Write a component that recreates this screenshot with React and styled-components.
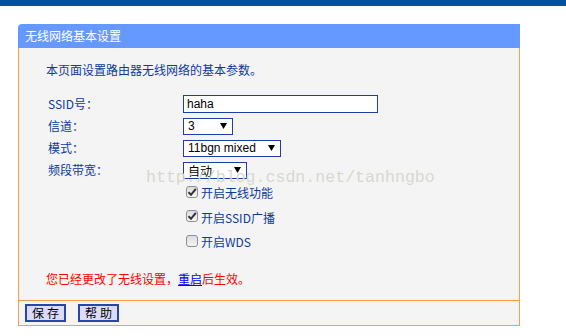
import styled, { createGlobalStyle } from 'styled-components';

const GlobalStyle = createGlobalStyle`
  html, body {
    margin: 0;
    padding: 0;
    background: #ffffff;
  }
  body {
    font-family: "Noto Sans CJK SC", "Liberation Sans", sans-serif;
    font-size: 12px;
  }
`;

const TopBar = styled.div`
  height: 6px;
  background: #0250a2;
`;

const Panel = styled.div`
  position: relative;
  width: 502px;
  margin: 18px 0 0 18px;
`;

const PanelHeader = styled.div`
  height: 24px;
  line-height: 24px;
  padding-left: 7px;
  background: #6699ff;
  color: #ffffff;
  font-size: 12px;
  border-top-left-radius: 4px;
`;

const PanelBody = styled.div`
  background: #f4f4f4;
  border-left: 1px solid #f7a04a;
  border-right: 1px solid #f7a04a;
  padding: 14px 0 13px 27px;
`;

const Intro = styled.div`
  line-height: 16px;
  color: #0c3a9c;
`;

const Form = styled.div`
  margin-top: 15px;
  padding-left: 2px;
`;

const FieldRow = styled.div`
  display: flex;
  align-items: center;
  height: 22px;
`;

const Label = styled.div`
  width: 135px;
  color: #0c3a9c;
  line-height: 16px;
`;

const TextInput = styled.input`
  box-sizing: border-box;
  width: 195px;
  height: 18px;
  margin: 0;
  padding: 0 3px;
  border: 1px solid #1f3fa0;
  background: #ffffff;
  font-family: "Liberation Sans", Arial, sans-serif;
  font-size: 12px;
  color: #000000;
  outline: none;
`;

const Select = styled.div`
  box-sizing: border-box;
  display: flex;
  align-items: center;
  justify-content: space-between;
  width: ${(p) => p.$width}px;
  height: 17px;
  padding: 0 5px 0 4px;
  border: 1px solid #1f3fa0;
  background: #ffffff;
  font-family: "Liberation Sans", "Noto Sans CJK SC", sans-serif;
  font-size: 12px;
  color: #000000;
`;

const CheckRow = styled.div`
  display: flex;
  align-items: center;
  height: 24.5px;
  padding-left: 140px;
`;

const CheckBox = styled.span`
  box-sizing: border-box;
  display: inline-flex;
  align-items: center;
  justify-content: center;
  width: 12px;
  height: 12px;
  margin-top: -3px;
  border: 1px solid #8e8f8f;
  border-radius: 3px;
  background: linear-gradient(#dcdcdc, #f6f6f6);
`;

const CheckText = styled.span`
  margin-left: 3px;
  color: #0c3a9c;
  line-height: 16px;
`;

const Message = styled.div`
  margin-top: 16px;
  line-height: 16px;
  color: #ff0000;
`;

const Link = styled.a`
  color: #0000ff;
  text-decoration: underline;
`;

const Footer = styled.div`
  display: flex;
  gap: 12px;
  height: 24px;
  padding: 3px 0 0 6px;
  box-sizing: border-box;
  height: 26px;
  background: #f4f4f4;
  border: 1px solid #f7a04a;
`;

const Button = styled.button`
  box-sizing: border-box;
  width: 41px;
  height: 18px;
  margin: 0;
  padding: 0;
  border: 2px solid #2646a8;
  background: #dcdcfa;
  color: #000000;
  font-family: "Noto Sans CJK SC", sans-serif;
  font-size: 12px;
  line-height: 14px;
  letter-spacing: 3px;
  text-indent: 3px;
`;

const Watermark = styled.div`
  position: absolute;
  left: 128px;
  top: 144px;
  font-family: "Liberation Mono", monospace;
  font-size: 16.6px;
  color: #d8d8d0;
  white-space: nowrap;
  pointer-events: none;
`;

const Arrow = () => (
  <svg width="7" height="6" viewBox="0 0 7 6">
    <polygon points="0,0 7,0 3.5,6" fill="#000" />
  </svg>
);

const Check = () => (
  <svg width="10" height="10" viewBox="0 0 10 10">
    <path d="M1.5 5.2 L4 7.8 L8.8 1.8" stroke="#333" strokeWidth="2" fill="none" />
  </svg>
);

const fields = [
  { label: '信道：', value: '3', width: 50 },
  { label: '模式：', value: '11bgn mixed', width: 98 },
  { label: '频段带宽：', value: '自动', width: 64 },
];

const options = [
  { text: '开启无线功能', checked: true },
  { text: '开启SSID广播', checked: true },
  { text: '开启WDS', checked: false },
];

export default function App() {
  return (
    <>
      <GlobalStyle />
      <TopBar />
      <Panel>
        <PanelHeader>无线网络基本设置</PanelHeader>
        <PanelBody>
          <Intro>本页面设置路由器无线网络的基本参数。</Intro>
          <Form>
            <FieldRow>
              <Label>SSID号：</Label>
              <TextInput value="haha" readOnly />
            </FieldRow>
            {fields.map((f) => (
              <FieldRow key={f.label}>
                <Label>{f.label}</Label>
                <Select $width={f.width}>
                  <span>{f.value}</span>
                  <Arrow />
                </Select>
              </FieldRow>
            ))}
          </Form>
          {options.map((o) => (
            <CheckRow key={o.text}>
              <CheckBox>{o.checked && <Check />}</CheckBox>
              <CheckText>{o.text}</CheckText>
            </CheckRow>
          ))}
          <Message>
            您已经更改了无线设置，<Link href="#">重启</Link>后生效。
          </Message>
        </PanelBody>
        <Footer>
          <Button>保存</Button>
          <Button>帮助</Button>
        </Footer>
        <Watermark>http://blog.csdn.net/tanhngbo</Watermark>
      </Panel>
    </>
  );
}
